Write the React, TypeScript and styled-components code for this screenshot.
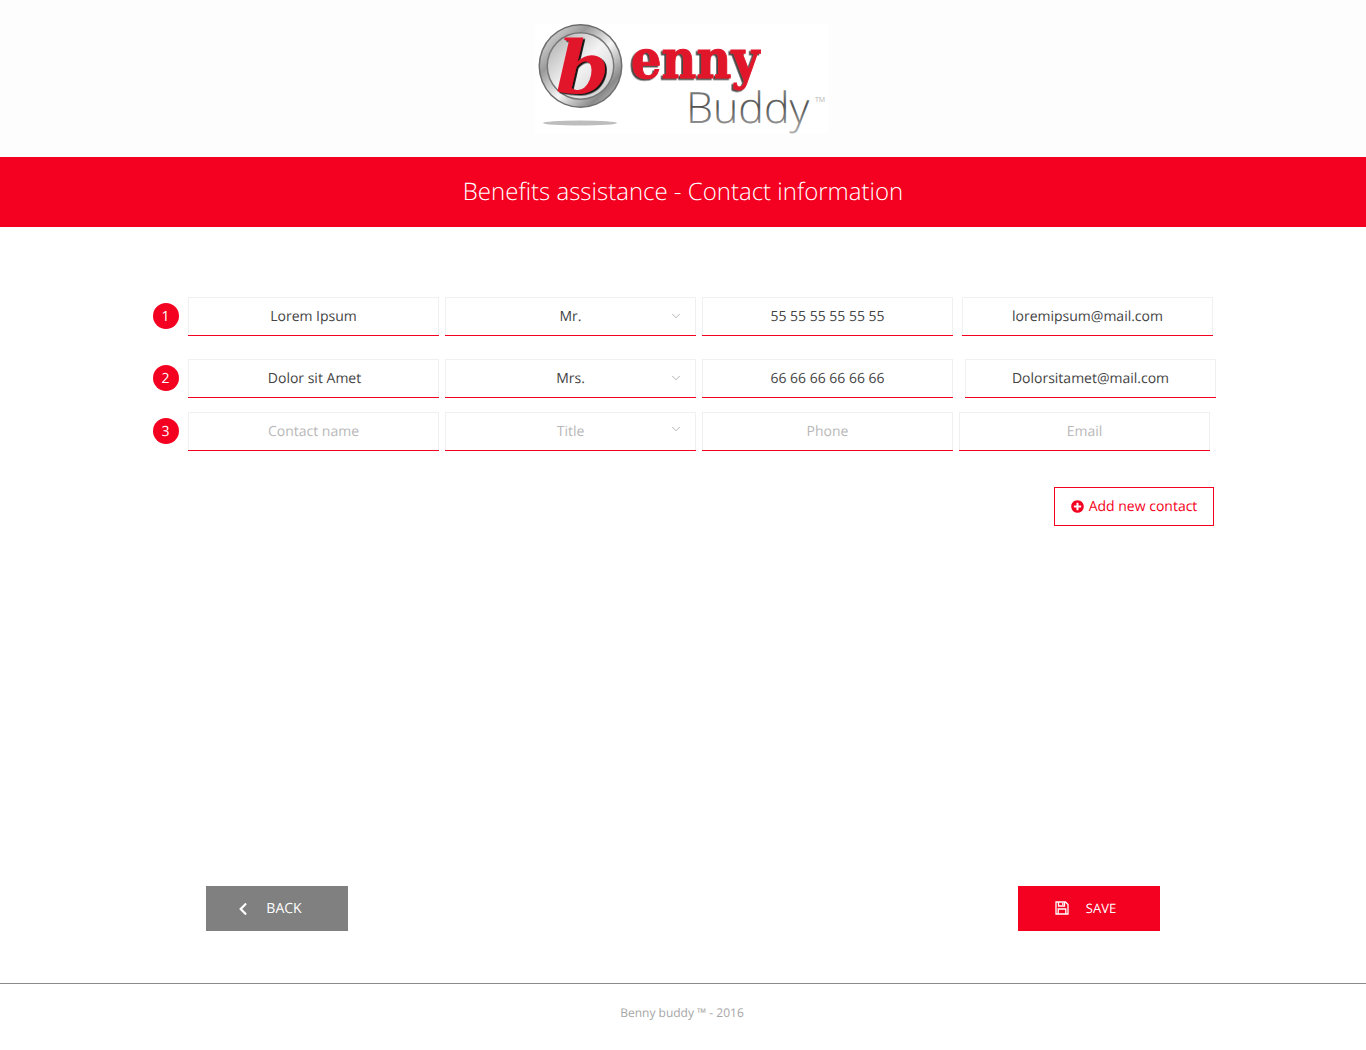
import React from "react";
import styled, { createGlobalStyle } from "styled-components";
import { FaChevronLeft, FaPlusCircle } from "react-icons/fa";
import { ChevronDown } from "lucide-react";

const RED = "#f40020";

const GlobalStyle = createGlobalStyle`
  html, body {
    margin: 0;
    padding: 0;
    background: #fff;
    font-family: "Open Sans", "Liberation Sans", sans-serif;
    text-rendering: geometricPrecision;
  }
  * { box-sizing: border-box; }
`;

const LogoBar = styled.header`
  height: 157px;
  background: #fdfdfd;
  padding: 24px 3px 0 0;
  display: flex;
  justify-content: center;
`;

const Banner = styled.div`
  height: 70px;
  background: ${RED};
  padding-bottom: 2px;
  display: flex;
  align-items: center;
  justify-content: center;
`;

const Title = styled.h1`
  margin: 0;
  color: #fff;
  font-size: 24px;
  font-weight: 300;
`;

const Main = styled.main`
  width: 1061px;
  margin-left: 153px;
  padding-top: 70px;
`;

const Row = styled.div<{ $below: number }>`
  display: flex;
  align-items: center;
  margin-bottom: ${(p) => p.$below}px;
`;

const Badge = styled.span`
  width: 26px;
  height: 26px;
  flex: none;
  margin: 0 9px 1px 0;
  padding-right: 1px;
  border-radius: 50%;
  background: ${RED};
  color: #fff;
  font-size: 14px;
  display: flex;
  align-items: center;
  justify-content: center;
`;

const Field = styled.div<{ $offset?: number }>`
  position: relative;
  width: 251px;
  height: 39px;
  flex: none;
  margin-left: ${(p) => p.$offset ?? 6}px;
  border: 1px solid #f0f0f0;
  border-bottom: 0;
  background: #fff;
  &:first-of-type {
    margin-left: 0;
  }
  &::after {
    content: "";
    position: absolute;
    left: -1px;
    right: -1px;
    bottom: 0;
    height: 1px;
    background: ${RED};
  }
`;

const Input = styled.input<{ $shift?: number }>`
  width: 100%;
  height: 100%;
  border: 0;
  outline: 0;
  padding: 0 0 2px ${(p) => p.$shift ?? 0}px;
  background: transparent;
  text-align: center;
  font-family: inherit;
  font-size: 14px;
  text-rendering: geometricPrecision;
  color: #444;
  &::placeholder {
    color: #b8b8b8;
    opacity: 1;
  }
`;

const Caret = styled(ChevronDown)<{ $raised?: boolean }>`
  position: absolute;
  right: 12px;
  top: ${(p) => (p.$raised ? 9 : 11)}px;
  color: #999;
`;

const AddRow = styled.div`
  display: flex;
  justify-content: flex-end;
  margin-top: 36px;
`;

const AddButton = styled.button`
  width: 160px;
  height: 39px;
  border: 1px solid ${RED};
  background: #fff;
  color: ${RED};
  font-family: inherit;
  font-size: 14px;
  text-rendering: geometricPrecision;
  padding: 0;
  display: flex;
  align-items: center;
  justify-content: center;
  gap: 5px;
`;

const Actions = styled.div`
  display: flex;
  justify-content: space-between;
  padding: 0 206px;
  margin-top: 360px;
`;

const ActionButton = styled.button<{ $tone: string; $size: number; $gap: number; $nudge: number; $lift: number }>`
  width: 142px;
  height: 45px;
  border: 0;
  background: ${(p) => p.$tone};
  color: #fff;
  font-family: inherit;
  font-size: ${(p) => p.$size}px;
  text-rendering: geometricPrecision;
  padding: 0 ${(p) => p.$nudge}px ${(p) => p.$lift}px 0;
  display: flex;
  align-items: center;
  justify-content: center;
  gap: ${(p) => p.$gap}px;
`;

const Footer = styled.footer`
  margin-top: 52px;
  height: 67px;
  border-top: 1px solid #8a8a8a;
  padding: 20px 2px 0 0;
  text-align: center;
  color: #a6a6a6;
  font-size: 12px;
  line-height: 18px;
`;

const FloppyIcon = () => (
  <svg width="14" height="14" viewBox="0 0 14 14" fill="none" stroke="currentColor" strokeWidth="1.3">
    <path d="M1 1H10.5L13 3.5V13H1Z" />
    <path d="M3.5 1V5H9.5V1" />
    <path d="M3.2 13V8H10.8V13" />
    <path d="M7.8 2V4" />
  </svg>
);

const Logo = () => (
  <svg width="293" height="110" viewBox="0 0 293 110" role="img" aria-label="Benny Buddy logo">
    <defs>
      <linearGradient id="ring" x1="0" y1="0" x2="1" y2="1">
        <stop offset="0" stopColor="#f0f0f0" />
        <stop offset="0.3" stopColor="#9a9a9a" />
        <stop offset="0.55" stopColor="#f6f6f6" />
        <stop offset="0.8" stopColor="#8a8a8a" />
        <stop offset="1" stopColor="#d8d8d8" />
      </linearGradient>
      <linearGradient id="disc" x1="0" y1="0" x2="1" y2="1">
        <stop offset="0" stopColor="#a9a9a9" />
        <stop offset="0.5" stopColor="#f4f4f4" />
        <stop offset="1" stopColor="#c8c8c8" />
      </linearGradient>
      <linearGradient id="chrome" x1="0" y1="0" x2="0" y2="1">
        <stop offset="0" stopColor="#a5a5a5" />
        <stop offset="0.5" stopColor="#555" />
        <stop offset="1" stopColor="#bbb" />
      </linearGradient>
      <filter id="inkB" x="-20%" y="-20%" width="140%" height="140%">
        <feDropShadow dx="1.5" dy="1.5" stdDeviation="0" floodColor="#151515" />
      </filter>
      <filter id="inkEnny" x="-10%" y="-10%" width="120%" height="130%">
        <feDropShadow dx="-2" dy="1.5" stdDeviation="0" floodColor="#454545" />
      </filter>
    </defs>
    <rect width="293" height="110" fill="#fff" />
    <ellipse cx="45" cy="99" rx="37" ry="2.5" fill="#bdbdbd" />
    <circle cx="45.5" cy="42" r="42" fill="#6d6d6d" />
    <circle cx="45.5" cy="42" r="40.5" fill="url(#ring)" />
    <circle cx="45.5" cy="42" r="34" fill="#777" />
    <circle cx="45.5" cy="42" r="32.5" fill="url(#disc)" />
    <text
      transform="translate(21 69) scale(1.3 1)"
      fontFamily="Liberation Serif"
      fontWeight="700"
      fontStyle="italic"
      fontSize="80"
      fill="#e2162b"
      filter="url(#inkB)"
    >
      b
    </text>
    <text
      transform="translate(96 54) scale(0.89 1)"
      fontFamily="DejaVu Serif"
      fontWeight="700"
      fontSize="54"
      fill="#e2162b"
      stroke="#e2162b"
      strokeWidth="1"
      filter="url(#inkEnny)"
    >
      enny
    </text>
    <text x="151" y="99" fontFamily="Open Sans" fontWeight="300" fontSize="43" fill="url(#chrome)">
      Buddy
    </text>
    <text x="280" y="78" fontFamily="Open Sans" fontSize="7" fill="#b5b5b5">
      TM
    </text>
  </svg>
);

type Contact = {
  name: string;
  title: string;
  phone: string;
  email: string;
  nameShift: number;
  emailOffset: number;
  below: number;
};

const contacts: Contact[] = [
  { name: "Lorem Ipsum", title: "Mr.", phone: "55 55 55 55 55 55", email: "loremipsum@mail.com", nameShift: 0, emailOffset: 9, below: 23 },
  { name: "Dolor sit Amet", title: "Mrs.", phone: "66 66 66 66 66 66", email: "Dolorsitamet@mail.com", nameShift: 2, emailOffset: 12, below: 14 },
  { name: "", title: "", phone: "", email: "", nameShift: 0, emailOffset: 6, below: 0 },
];

const App = () => (
  <>
    <GlobalStyle />
    <LogoBar>
      <Logo />
    </LogoBar>
    <Banner>
      <Title>Benefits assistance - Contact information</Title>
    </Banner>
    <Main>
      {contacts.map((c, i) => (
        <Row key={i} $below={c.below}>
          <Badge>{i + 1}</Badge>
          <Field>
            <Input readOnly value={c.name} placeholder="Contact name" $shift={c.nameShift} />
          </Field>
          <Field>
            <Input readOnly value={c.title} placeholder="Title" />
            <Caret size={14} strokeWidth={1.25} $raised={!c.title} />
          </Field>
          <Field>
            <Input readOnly value={c.phone} placeholder="Phone" />
          </Field>
          <Field $offset={c.emailOffset}>
            <Input readOnly value={c.email} placeholder="Email" />
          </Field>
        </Row>
      ))}
      <AddRow>
        <AddButton>
          <FaPlusCircle size={13} />
          Add new contact
        </AddButton>
      </AddRow>
    </Main>
    <Actions>
      <ActionButton $tone="#808080" $size={14} $gap={16} $nudge={16} $lift={0}>
        <FaChevronLeft size={14} />
        BACK
      </ActionButton>
      <ActionButton $tone={RED} $size={13} $gap={17} $nudge={7} $lift={2}>
        <FloppyIcon />
        SAVE
      </ActionButton>
    </Actions>
    <Footer>Benny buddy ™ - 2016</Footer>
  </>
);

export default App;
